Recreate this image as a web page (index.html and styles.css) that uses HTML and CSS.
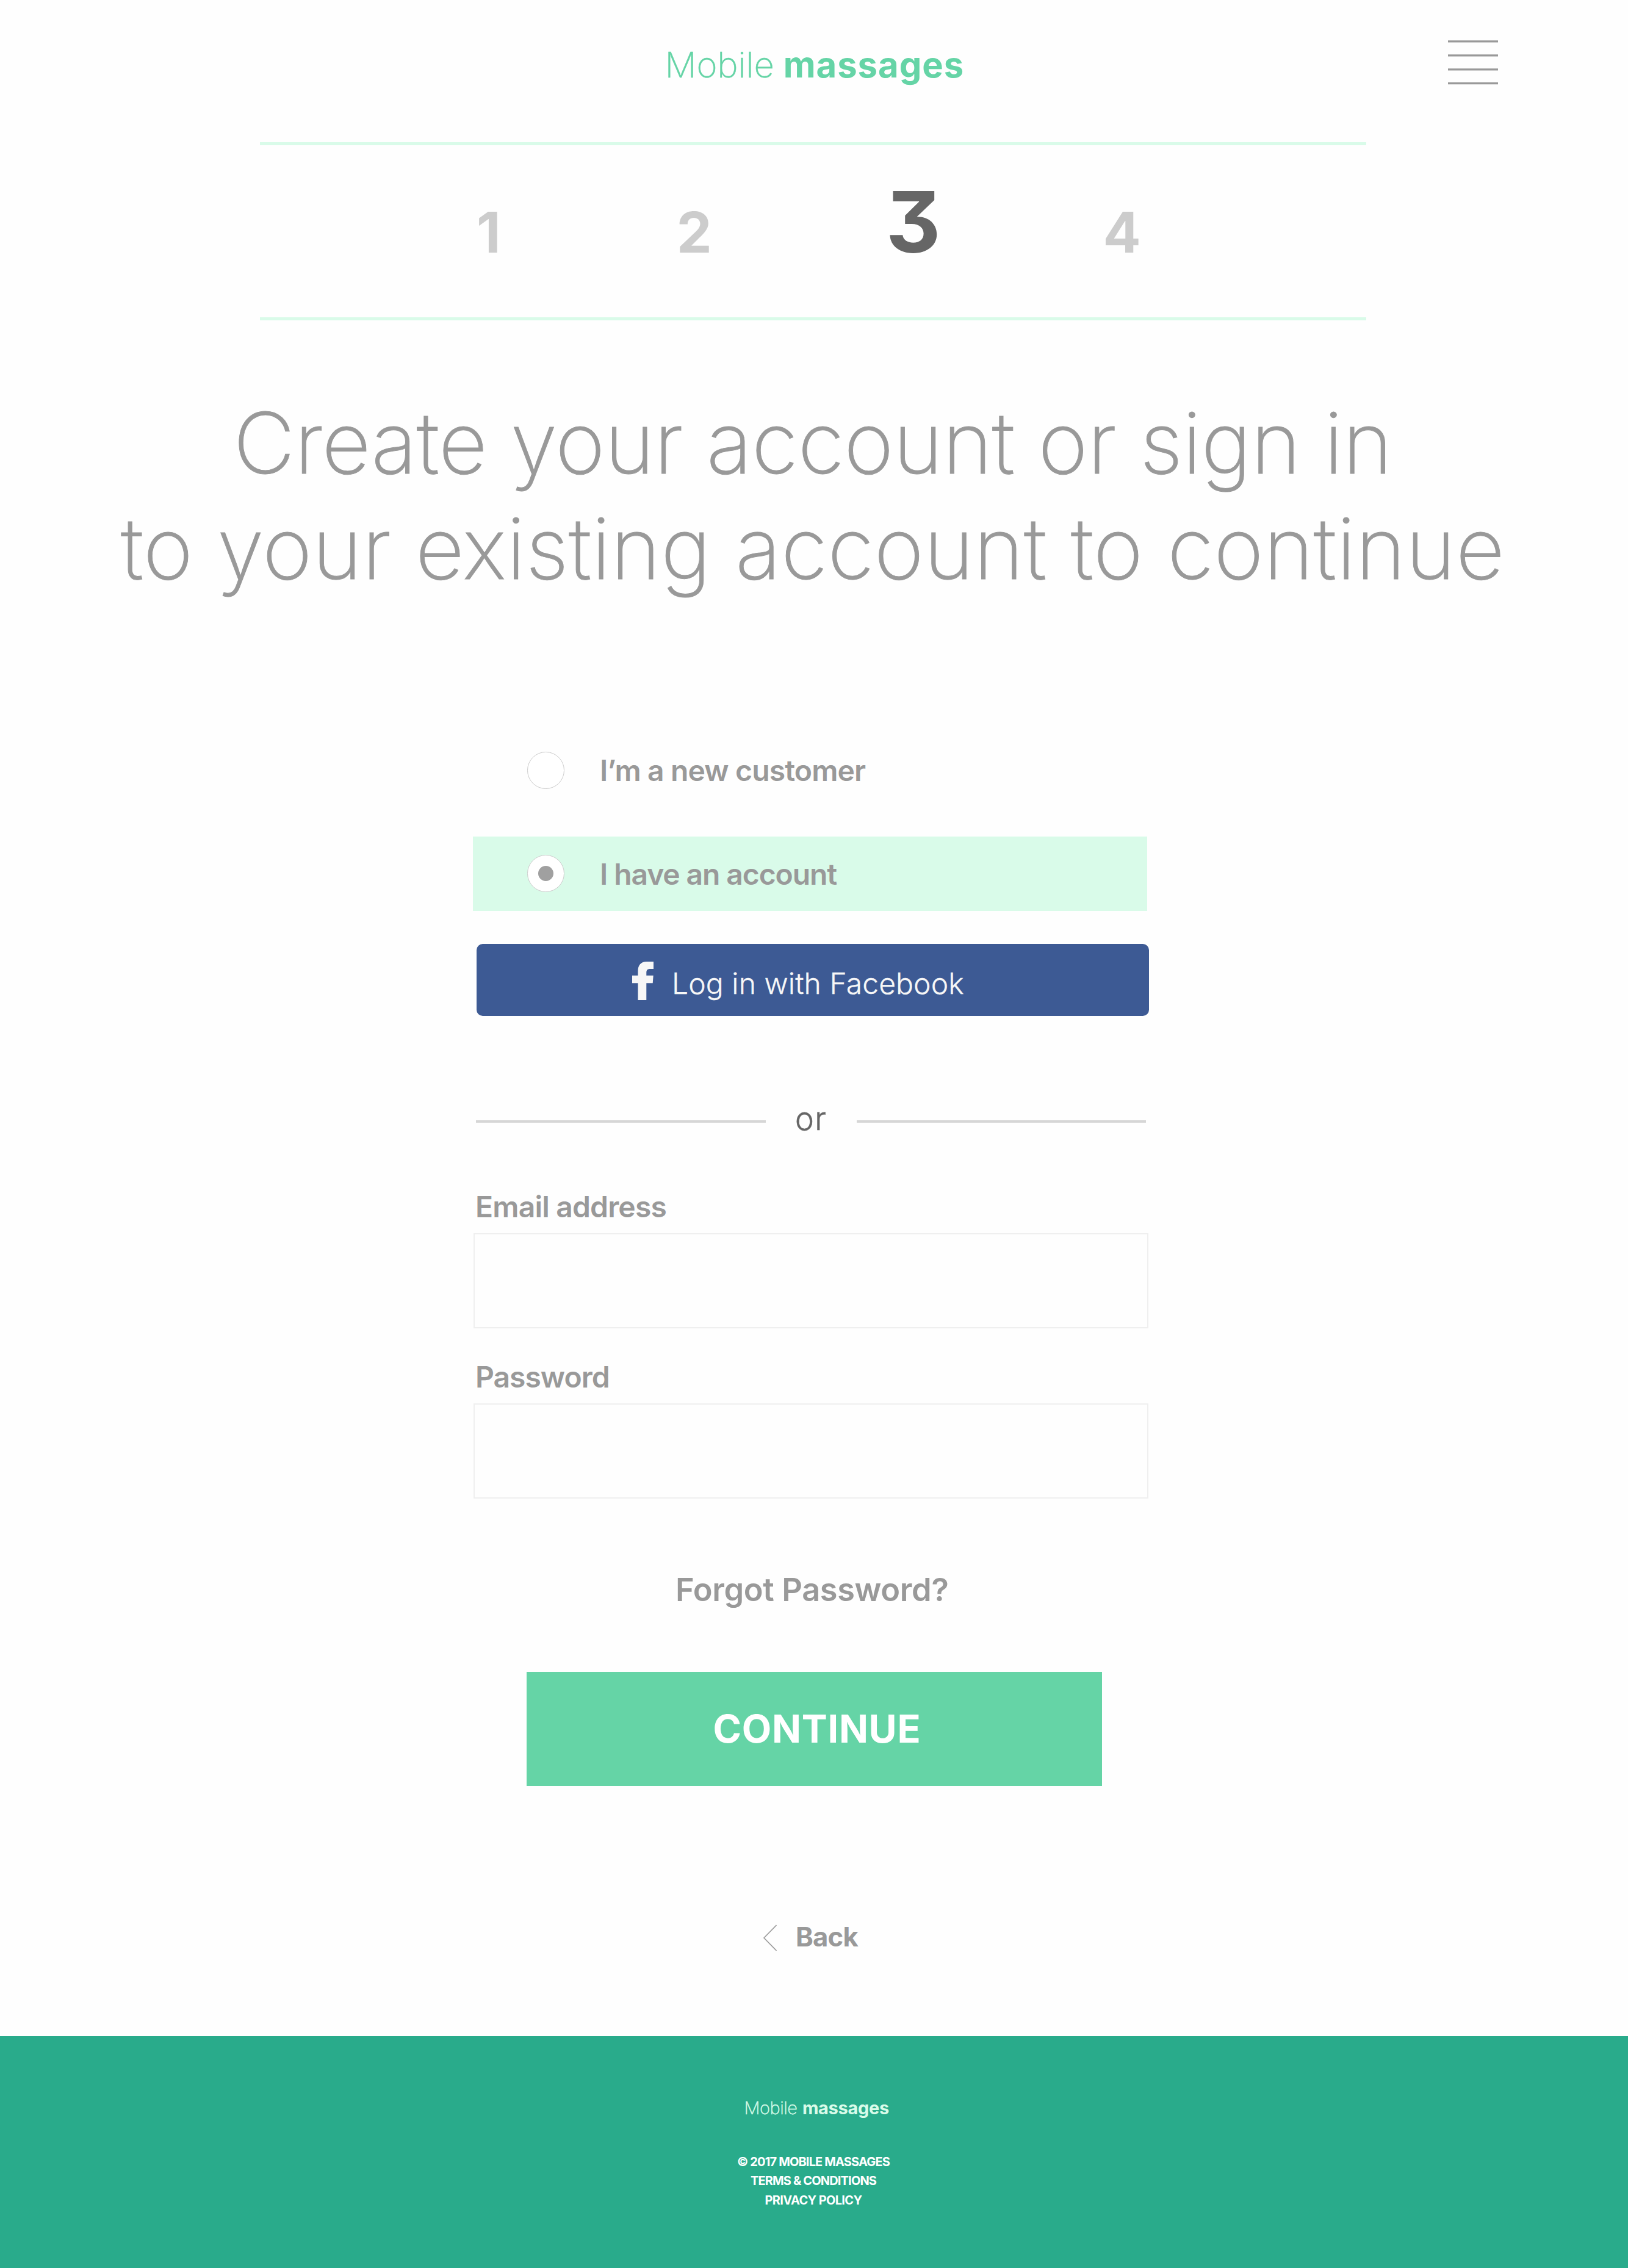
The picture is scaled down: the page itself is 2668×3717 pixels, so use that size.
FILE: index.html
```
<!DOCTYPE html>
<html lang="en">
<head>
<meta charset="utf-8">
<title>Mobile massages – Sign in</title>
<link rel="stylesheet" href="styles.css">
</head>
<body>
<header class="header">
  <a class="logo"><span class="logo-light">Mobile</span><span class="logo-bold">massages</span></a>
  <svg class="menu" width="82" height="74" viewBox="0 0 82 74" fill="none" stroke="#999" stroke-width="3.2">
    <path d="M0 1.9H82M0 24.9H82M0 47.9H82M0 70.6H82"/>
  </svg>
</header>

<main>
  <ol class="steps">
    <li class="step step-1">1</li>
    <li class="step step-2">2</li>
    <li class="step step-3 current">3</li>
    <li class="step step-4">4</li>
  </ol>

  <h1 class="title"><span class="title-first">Create your account or sign in</span><br><span class="title-second">to your existing account to continue</span></h1>

  <form class="form">
    <div class="choice"><span class="radio"></span><span class="choice-new">I’m a new customer</span></div>
    <div class="choice selected"><span class="radio"></span><span class="choice-existing">I have an account</span></div>

    <a class="facebook">
      <svg class="facebook-icon" width="35" height="63" viewBox="0 0 35 63"><path fill="#f7f7f7" d="M35 0V12H29C25 12 23.3 14 23.3 18V22.7H34.7L33.7 35.3H23.3V63H9.5V35.3H0V22.7H9.5V15.5C9.5 6 14 0 24 0Z"/></svg>
      <span class="facebook-label">Log in with Facebook</span>
    </a>

    <div class="divider"><span class="rule"></span><span class="or">or</span><span class="rule"></span></div>

    <label class="label" for="email">Email address</label>
    <input class="field" id="email" type="email">
    <label class="label label-password" for="password">Password</label>
    <input class="field" id="password" type="password">

    <a class="forgot">Forgot Password?</a>
    <button class="continue" type="button">CONTINUE</button>
  </form>

  <a class="back">
    <svg width="24" height="44" viewBox="0 0 24 44" fill="none" stroke="#999" stroke-width="1.6"><path d="M22.5 2L2 23L22.5 44"/></svg>
    <span>Back</span>
  </a>
</main>

<footer class="footer">
  <a class="logo logo-small"><span class="logo-light">Mobile</span><span class="logo-bold">massages</span></a>
  <div class="legal">
    <span>© 2017 MOBILE MASSAGES</span>
    <span>TERMS &amp; CONDITIONS</span>
    <span class="privacy">PRIVACY POLICY</span>
  </div>
</footer>
</body>
</html>
```
FILE: styles.css
```
* { box-sizing: border-box; }

body {
  margin: 0;
  height: 3717px;
  display: flex;
  flex-direction: column;
  background: #fefefe;
  color: #999;
  font-family: Inter, "Liberation Sans", sans-serif;
}

.header {
  height: 233px;
  padding: 66px 213px 0 1089.5px;
  display: flex;
  justify-content: space-between;
  align-items: flex-start;
}

.logo {
  display: flex;
  gap: 15px;
  margin-top: 10px;
  font-size: 58px;
  line-height: 60px;
  color: #65d4a6;
}
.logo-light { font-weight: 200; letter-spacing: -0.1px; -webkit-text-stroke: 0.4px; }
.logo-bold { font-weight: 700; letter-spacing: 0.95px; }

.menu { display: block; }

.steps {
  list-style: none;
  margin: 0 0 0 426px;
  padding: 56px 0 0 355px;
  width: 1813px;
  height: 292px;
  display: flex;
  align-items: baseline;
  border: solid #d9fbe9;
  border-width: 5px 0;
  font-size: 92px;
  line-height: 92px;
  font-weight: 700;
  font-feature-settings: "cv09";
  color: #ccc;
}
.current { font-size: 139px; line-height: 140px; color: #666; }
.step-2 { margin-left: 288px; }
.step-3 { margin-left: 285px; }
.step-4 { margin-left: 266px; }

.title {
  margin: 114px 4px 0 0;
  font-size: 139px;
  line-height: 173px;
  font-weight: 200;
  text-align: center;
  white-space: nowrap;
  -webkit-text-stroke: 1px;
}
.title-first { letter-spacing: -0.5px; }
.title-second { letter-spacing: 0.3px; }

.form {
  margin: 217px 0 0 775px;
  width: 1110px;
  display: flex;
  flex-direction: column;
}

.choice {
  width: 1105px;
  height: 121.5px;
  padding-left: 89px;
  display: flex;
  align-items: center;
  gap: 58px;
  font-size: 48px;
  font-weight: 600;
  line-height: 60px;
}
.choice.selected { margin-top: 47.5px; background: #d9fbe9; }
.choice-new { letter-spacing: -0.85px; }
.choice-existing { letter-spacing: -1.1px; padding-top: 3px; }

.radio {
  width: 61px;
  height: 61px;
  border: 1px solid #ccc;
  border-radius: 50%;
  background: #fff;
  display: grid;
  place-items: center;
}
.selected .radio::before {
  content: "";
  width: 25px;
  height: 25px;
  border-radius: 50%;
  background: #a0a0a0;
}

.facebook {
  margin: 54.5px 0 0 6px;
  width: 1102px;
  height: 117.5px;
  padding-left: 255px;
  display: flex;
  align-items: center;
  gap: 30px;
  border-radius: 10px;
  background: #3d5a94;
  color: #f7f7f7;
  font-size: 48px;
  line-height: 60px;
  font-weight: 300;
}
.facebook-icon { margin-top: 4px; }
.facebook-label { letter-spacing: 0.1px; padding-top: 13px; -webkit-text-stroke: 0.3px; }

.divider {
  margin: 138.5px 0 0 5px;
  width: 1098.5px;
  height: 70px;
  display: flex;
  align-items: center;
  justify-content: space-between;
}
.rule { width: 474.5px; height: 4px; background: #d6d6d6; }
.or {
  padding-bottom: 9px;
  font-size: 52px;
  line-height: 60px;
  font-weight: 300;
  letter-spacing: 1.5px;
  color: #666;
  -webkit-text-stroke: 0.5px;
}

.label {
  margin: 74.5px 0 0 4px;
  font-size: 48px;
  line-height: 60px;
  font-weight: 600;
  letter-spacing: -0.82px;
}
.label-password { margin-top: 50.5px; letter-spacing: -1px; }
.field {
  margin: 13px 0 0 1px;
  width: 1106px;
  height: 156px;
  border: 2px solid #efefef;
  background: transparent;
}

.forgot {
  margin: 117px 0 0 332px;
  font-size: 52.3px;
  line-height: 64px;
  font-weight: 600;
  letter-spacing: -0.35px;
}

.continue {
  margin: 103px 0 0 88px;
  width: 942.5px;
  height: 186.5px;
  padding: 0 0 0 305.5px;
  border: 0;
  background: #65d4a6;
  color: #fff;
  font: 700 63px/80px Inter, "Liberation Sans", sans-serif;
  letter-spacing: 0.7px;
  text-align: left;
}

.back {
  margin: 223px 0 0 1250px;
  display: flex;
  align-items: center;
  gap: 30px;
  font-size: 43.6px;
  line-height: 50px;
  font-weight: 700;
  letter-spacing: -0.8px;
}

.footer {
  margin-top: auto;
  height: 380px;
  padding-top: 97.5px;
  background: #29ab8b;
  color: #fff;
}
.logo-small {
  gap: 8.5px;
  margin: 0 0 0 1219.5px;
  font-size: 29px;
  line-height: 40px;
  color: #d9fbe9;
}
.logo-small .logo-light { letter-spacing: -0.5px; }
.logo-small .logo-bold { letter-spacing: -0.3px; }
.legal {
  margin: 53px 2px 0 0;
  display: flex;
  flex-direction: column;
  align-items: center;
  font-size: 20px;
  line-height: 31.5px;
  font-weight: 700;
  letter-spacing: -0.85px;
}
.privacy { letter-spacing: -0.65px; }
```
